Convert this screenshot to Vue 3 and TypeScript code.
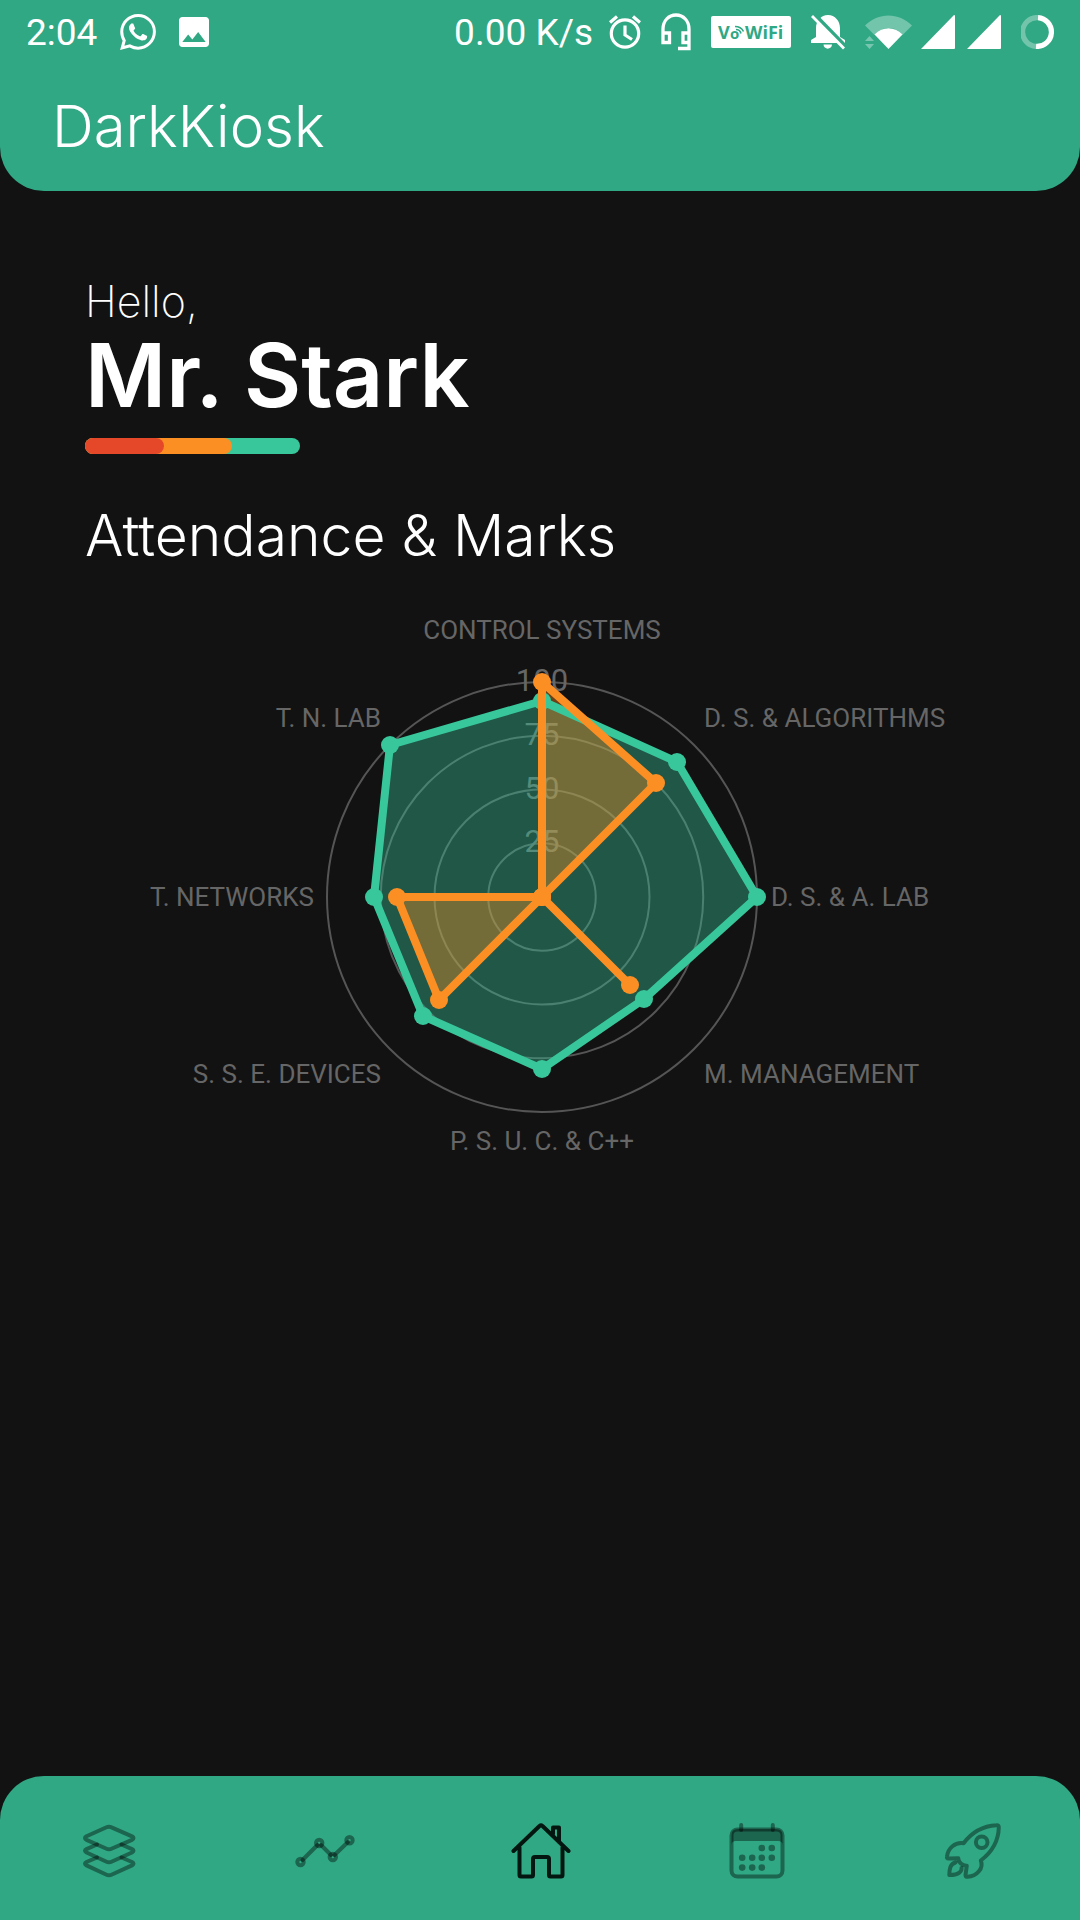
<script setup lang="ts">
interface Subject {
  name: string
  attendance: number
  marks: number
  x: number
  y: number
  anchor: 'start' | 'middle' | 'end'
}

const cx = 542
const cy = 297
const radius = 215

const rings: number[] = [25, 50, 75, 100]

const subjects: Subject[] = [
  { name: 'CONTROL SYSTEMS', attendance: 91, marks: 100, x: 542, y: 39, anchor: 'middle' },
  { name: 'D. S. & ALGORITHMS', attendance: 89, marks: 75, x: 704, y: 127, anchor: 'start' },
  { name: 'D. S. & A. LAB', attendance: 100, marks: 0, x: 771, y: 306, anchor: 'start' },
  { name: 'M. MANAGEMENT', attendance: 67, marks: 58, x: 704, y: 483, anchor: 'start' },
  { name: 'P. S. U. C. & C++', attendance: 80, marks: 0, x: 542, y: 550, anchor: 'middle' },
  { name: 'S. S. E. DEVICES', attendance: 78, marks: 67.5, x: 381, y: 483, anchor: 'end' },
  { name: 'T. NETWORKS', attendance: 78, marks: 67.5, x: 314, y: 306, anchor: 'end' },
  { name: 'T. N. LAB', attendance: 100, marks: 0, x: 381, y: 127, anchor: 'end' },
]

function place(value: number, index: number) {
  const angle = (index / subjects.length) * Math.PI * 2
  const r = (value / 100) * radius
  return { x: Math.round(cx + r * Math.sin(angle)), y: Math.round(cy - r * Math.cos(angle)) }
}

const series = [
  { key: 'attendance', points: subjects.map((s, i) => place(s.attendance, i)) },
  { key: 'marks', points: subjects.map((s, i) => place(s.marks, i)) },
]

const outline = (points: { x: number; y: number }[]) => points.map((p) => `${p.x},${p.y}`).join(' ')
</script>

<template>
  <div class="screen">
    <header class="top">
      <div class="status">
        <div class="status-side">
          <span class="status-text">2:04</span>
          <svg width="36" height="36" viewBox="0 0 24 24" fill="#fff">
            <path d="M17.472 14.382c-.297-.149-1.758-.867-2.03-.967-.273-.099-.471-.148-.67.15-.197.297-.767.966-.94 1.164-.173.199-.347.223-.644.075-.297-.15-1.255-.463-2.39-1.475-.883-.788-1.48-1.761-1.653-2.059-.173-.297-.018-.458.13-.606.134-.133.298-.347.446-.52.149-.174.198-.298.298-.497.099-.198.05-.371-.025-.52-.075-.149-.669-1.612-.916-2.207-.242-.579-.487-.5-.669-.51-.173-.008-.371-.01-.57-.01-.198 0-.52.074-.792.372-.272.297-1.04 1.016-1.04 2.479 0 1.462 1.065 2.875 1.213 3.074.149.198 2.096 3.2 5.077 4.487.709.306 1.262.489 1.694.625.712.227 1.36.195 1.871.118.571-.085 1.758-.719 2.006-1.413.248-.694.248-1.289.173-1.413-.074-.124-.272-.198-.57-.347m-5.421 7.403h-.004a9.87 9.87 0 01-5.031-1.378l-.361-.214-3.741.982.998-3.648-.235-.374a9.86 9.86 0 01-1.51-5.26c.001-5.45 4.436-9.884 9.888-9.884 2.64 0 5.122 1.03 6.988 2.898a9.825 9.825 0 012.893 6.994c-.003 5.45-4.437 9.884-9.885 9.884m8.413-18.297A11.815 11.815 0 0012.05 0C5.495 0 .16 5.335.157 11.892c0 2.096.547 4.142 1.588 5.945L.057 24l6.305-1.654a11.882 11.882 0 005.683 1.448h.005c6.554 0 11.89-5.335 11.893-11.893a11.821 11.821 0 00-3.48-8.413Z" />
          </svg>
          <svg width="30" height="30" viewBox="3 3 18 18" fill="#fff">
            <path d="M21 19V5c0-1.1-.9-2-2-2H5c-1.1 0-2 .9-2 2v14c0 1.1.9 2 2 2h14c1.1 0 2-.9 2-2zM8.5 13.500l2.500 3.010L14.500 12l4.500 6H5l3.500-4.500z" />
          </svg>
        </div>
        <div class="status-side right">
          <span class="status-text">0.00 K/s</span>
          <div class="status-icons">
            <svg width="32" height="36" viewBox="0 0 32 36" fill="none" stroke="#fff" stroke-width="3.2">
              <circle cx="16" cy="19.500" r="13.700" />
              <path d="M16 11.500V21l7 4.500M1 8.500l7-6M31 8.500l-7-6" />
            </svg>
            <svg width="30" height="38" viewBox="0 0 30 38" fill="none" stroke="#fff" stroke-width="3.300">
              <path d="M2 29.500V16C2 8 7.500 2 15 2s13 6 13 14v19.500H17M2 20h6.500v9.500H2zM28 20h-6v9.500h6" />
            </svg>
            <svg width="80" height="32" viewBox="0 0 80 32" role="img" aria-label="VoWiFi">
              <rect width="80" height="32" rx="2" fill="#fff" />
              <g class="vowifi">
                <text x="7" y="23">V</text>
                <text x="19" y="23" class="vowifi-o">o</text>
                <text x="34" y="23">WiFi</text>
              </g>
              <path d="M24 10.500q6 0 8.500 5M25 13.500q4 0 5 4" fill="none" stroke="#30a884" stroke-width="1.600" />
            </svg>
            <svg width="34" height="36" viewBox="0 0 34 36">
              <path d="M17 1C10 1 5 7 5 14v9L0 26v3h34v-3l-5-3v-9C29 7 24 1 17 1zM12.500 30.500h8.500c0 5.500-8.500 5.500-8.500 0z" fill="#fff" />
              <path d="M3 0l32 33" stroke="#30a884" stroke-width="4" />
              <path d="M1 2l32 32.500" stroke="#fff" stroke-width="2.800" />
            </svg>
            <div class="signals">
              <svg width="48" height="34" viewBox="0 0 48 34" fill="#fff">
                <path d="M0 10.500C13-3 34-3 47 10.500L37.500 20C31 10.500 17 10.500 9.500 20z" opacity=".32" />
                <path d="M23.500 34L9.500 19.500c8-8.500 20-8.500 28 0z" />
                <path d="M0 26l4.500-5L9 26zM0 29h9l-4.500 5z" opacity=".35" />
              </svg>
              <div class="bars">
                <svg width="35" height="34" viewBox="0 0 35 34" fill="#fff"><path d="M1 34L34 0q1 0 1 1v32q0 1-1 1z" /></svg>
                <svg width="35" height="34" viewBox="0 0 35 34" fill="#fff"><path d="M1 34L34 0q1 0 1 1v32q0 1-1 1z" /></svg>
              </div>
            </div>
            <svg width="34" height="34" viewBox="0 0 34 34" fill="none" stroke="#fff" stroke-width="5.200">
              <path d="M17 2.600A14.400 14.400 0 0 1 15 31.400" />
              <path d="M17 2.600A14.400 14.400 0 0 0 15 31.400" opacity=".33" />
            </svg>
          </div>
        </div>
      </div>
      <div class="app-title">DarkKiosk</div>
    </header>

    <main class="content">
      <section class="greeting">
        <p class="hello">Hello,</p>
        <h1 class="name">Mr. Stark</h1>
        <div class="stripe"><div class="stripe-orange"><div class="stripe-red"></div></div></div>
        <h2 class="section-title">Attendance &amp; Marks</h2>
      </section>

      <svg class="chart" viewBox="0 0 1080 580" role="img" aria-label="Attendance and marks by subject">
        <circle v-for="ring in rings" :key="ring" class="ring" :cx="cx" :cy="cy" :r="(ring / 100) * radius" />
        <text v-for="ring in rings" :key="`scale-${ring}`" class="scale" :x="cx" :y="cy - (ring / 100) * radius + 9">{{ ring }}</text>
        <text v-for="s in subjects" :key="s.name" class="subject" :x="s.x" :y="s.y" :text-anchor="s.anchor">{{ s.name }}</text>
        <polygon v-for="area in series" :key="`area-${area.key}`" class="area" :class="area.key" :points="outline(area.points)" />
        <g v-for="line in series" :key="line.key" :class="line.key">
          <polygon class="edge" :points="outline(line.points)" />
          <circle v-for="(p, i) in line.points" :key="i" class="dot" :cx="p.x" :cy="p.y" r="9" />
        </g>
      </svg>
    </main>

    <nav class="tabs">
      <button class="tab" type="button" aria-label="Courses">
        <svg class="tab-icon" viewBox="0 0 60 60">
          <path d="M27.500 6.300Q30 5 32.500 6.300L53 15.300Q56 17 53 18.900L33 27.500Q30 29 27 27.500L7.500 18.900Q4.500 17 7.500 15.300Z" />
          <path d="M42.500 23.500L53 28.100Q56 29.800 53 31.500L33 40.500Q30 42 27 40.500L7.500 31.500Q4.500 29.800 7.500 28.100L18 23.500" />
          <path d="M42.500 36.500L53 41Q56 42.700 53 44.400L33 53.500Q30 55 27 53.500L7.500 44.400Q4.500 42.700 7.500 41L18 36.500" />
        </svg>
      </button>
      <button class="tab" type="button" aria-label="Progress">
        <svg class="tab-icon" viewBox="0 0 60 60">
          <path d="M7.500 39L22.500 24M26 24L36 34M39.500 34L53 21" />
          <circle cx="5.500" cy="41" r="3.200" /><circle cx="24.200" cy="22" r="3.200" />
          <circle cx="37.800" cy="36" r="3.200" /><circle cx="54.500" cy="19.200" r="3.200" />
        </svg>
      </button>
      <button class="tab active" type="button" aria-label="Home" aria-current="page">
        <svg class="tab-icon" viewBox="0 0 60 60">
          <path d="M2.500 30L28.500 5Q30 3.800 31.500 5L57.500 30M8.500 26.500V54Q8.500 55.500 10 55.500H20.500Q22 55.500 22 54V38Q22 36 24 36H36Q38 36 38 38V54Q38 55.500 39.500 55.500H50Q51.500 55.500 51.500 54V26.500M42 13V6.500H48V21" />
        </svg>
      </button>
      <button class="tab" type="button" aria-label="Calendar">
        <svg class="tab-icon" viewBox="0 0 60 60">
          <rect x="4.500" y="8.500" width="51" height="47" rx="6" />
          <path d="M14.200 4V9M45.800 4V9" />
          <path class="solid" d="M4.500 24V14Q4.500 8 11 8H49Q55.500 8 55.500 14V24Q55.500 20 51 20H9Q4.500 20 4.500 24Z" />
          <g class="solid">
            <circle cx="34.800" cy="27" r="3.300" /><circle cx="44.800" cy="27" r="3.300" />
            <circle cx="15.200" cy="36.800" r="3.300" /><circle cx="25.200" cy="36.800" r="3.300" /><circle cx="34.800" cy="36.800" r="3.300" /><circle cx="44.800" cy="36.800" r="3.300" />
            <circle cx="15.200" cy="46.600" r="3.300" /><circle cx="25.200" cy="46.600" r="3.300" /><circle cx="34.800" cy="46.600" r="3.300" />
          </g>
        </svg>
      </button>
      <button class="tab" type="button" aria-label="Launch">
        <svg class="tab-icon" viewBox="0 0 60 60">
          <path d="M53.500 4.300Q56 4 55.800 6.500C55.500 19 49 31 37.800 39.500C41 47 34 55.500 24.500 55.800Q22.500 56 22.500 54L23.800 44.800C19.500 45 15 41 15.300 37.200L5.500 37.500Q3.500 37.500 4 35.500C5 27 12 21 20.600 22.300C29 11 41 5 53.500 4.300Z" />
          <circle cx="38.700" cy="21.200" r="5.800" />
          <path d="M12.500 41.500C7 43 6.500 48 6.300 54Q14 54 16.500 51.500Q19 49.500 18.500 47" />
        </svg>
      </button>
    </nav>
  </div>
</template>

<style>
body {
  margin: 0;
  background: #121212;
}
</style>

<style scoped>
.screen {
  display: flex;
  flex-direction: column;
  min-height: 100vh;
  background: #121212;
  color: #fff;
  font-family: Inter, "Open Sans", sans-serif;
}
.top {
  background: #30a884;
  border-radius: 0 0 44px 44px;
  height: 191px;
}
.status {
  display: flex;
  justify-content: space-between;
  height: 64px;
  padding: 0 25px 0 26px;
}
.status-side {
  display: flex;
  align-items: center;
  gap: 23px;
}
.right {
  gap: 16px;
}
.status-icons {
  display: flex;
  align-items: center;
  gap: 20px;
}
.status-text {
  font: 400 37px/68px Roboto, sans-serif;
  padding-top: 2px;
}
.signals {
  display: flex;
  gap: 7px;
}
.bars {
  display: flex;
  gap: 11px;
}
.vowifi {
  fill: #30a884;
  font: 700 18px "Open Sans", sans-serif;
}
.vowifi-o {
  font-size: 15px;
}
.app-title {
  padding-left: 52px;
  font-weight: 300;
  font-size: 58px;
  line-height: 124px;
}
.content {
  flex: 1;
}
.greeting {
  padding: 84px 85px 0;
}
.hello {
  margin: 0;
  font-weight: 200;
  font-size: 43px;
  line-height: 52px;
}
.name {
  margin: 0;
  font-weight: 600;
  font-size: 88px;
  line-height: 96px;
}
.stripe {
  width: 215px;
  height: 16px;
  margin-top: 15px;
  border-radius: 8px;
  background: #38c79b;
}
.stripe-orange {
  width: 147px;
  height: 16px;
  border-radius: 8px;
  background: #fc8f24;
}
.stripe-red {
  width: 79px;
  height: 16px;
  border-radius: 8px;
  background: #e54828;
}
.section-title {
  margin: 50px 0 0;
  font-weight: 300;
  font-size: 57px;
  line-height: 64px;
}
.chart {
  display: block;
  width: 100%;
  margin-top: 32px;
}
.ring {
  fill: none;
  stroke: #555;
  stroke-width: 2px;
}
.scale {
  fill: #666;
  font: 400 31px Roboto, sans-serif;
  text-anchor: middle;
}
.subject {
  fill: #666;
  font: 400 26px Roboto, sans-serif;
}
.attendance {
  fill: #38c79b;
  stroke: #38c79b;
}
.marks {
  fill: #fc8f24;
  stroke: #fc8f24;
}
.area {
  fill-opacity: 0.38;
  stroke: none;
}
.edge {
  fill: none;
  stroke-width: 8px;
  stroke-linejoin: round;
}
.dot {
  stroke: none;
}
.tabs {
  display: flex;
  height: 144px;
  border-radius: 44px 44px 0 0;
  background: #30a884;
}
.tab {
  flex: 1;
  display: flex;
  align-items: center;
  justify-content: center;
  padding: 6px 0 0 2px;
  border: 0;
  background: none;
}
.tab-icon {
  width: 60px;
  height: 60px;
  fill: none;
  stroke: #000;
  stroke-opacity: 0.4;
  stroke-width: 4px;
  stroke-linecap: round;
  stroke-linejoin: round;
}
.solid {
  fill: #000;
  fill-opacity: 0.4;
  stroke: none;
}
.active .tab-icon {
  stroke: #03160f;
  stroke-opacity: 1;
}
</style>
